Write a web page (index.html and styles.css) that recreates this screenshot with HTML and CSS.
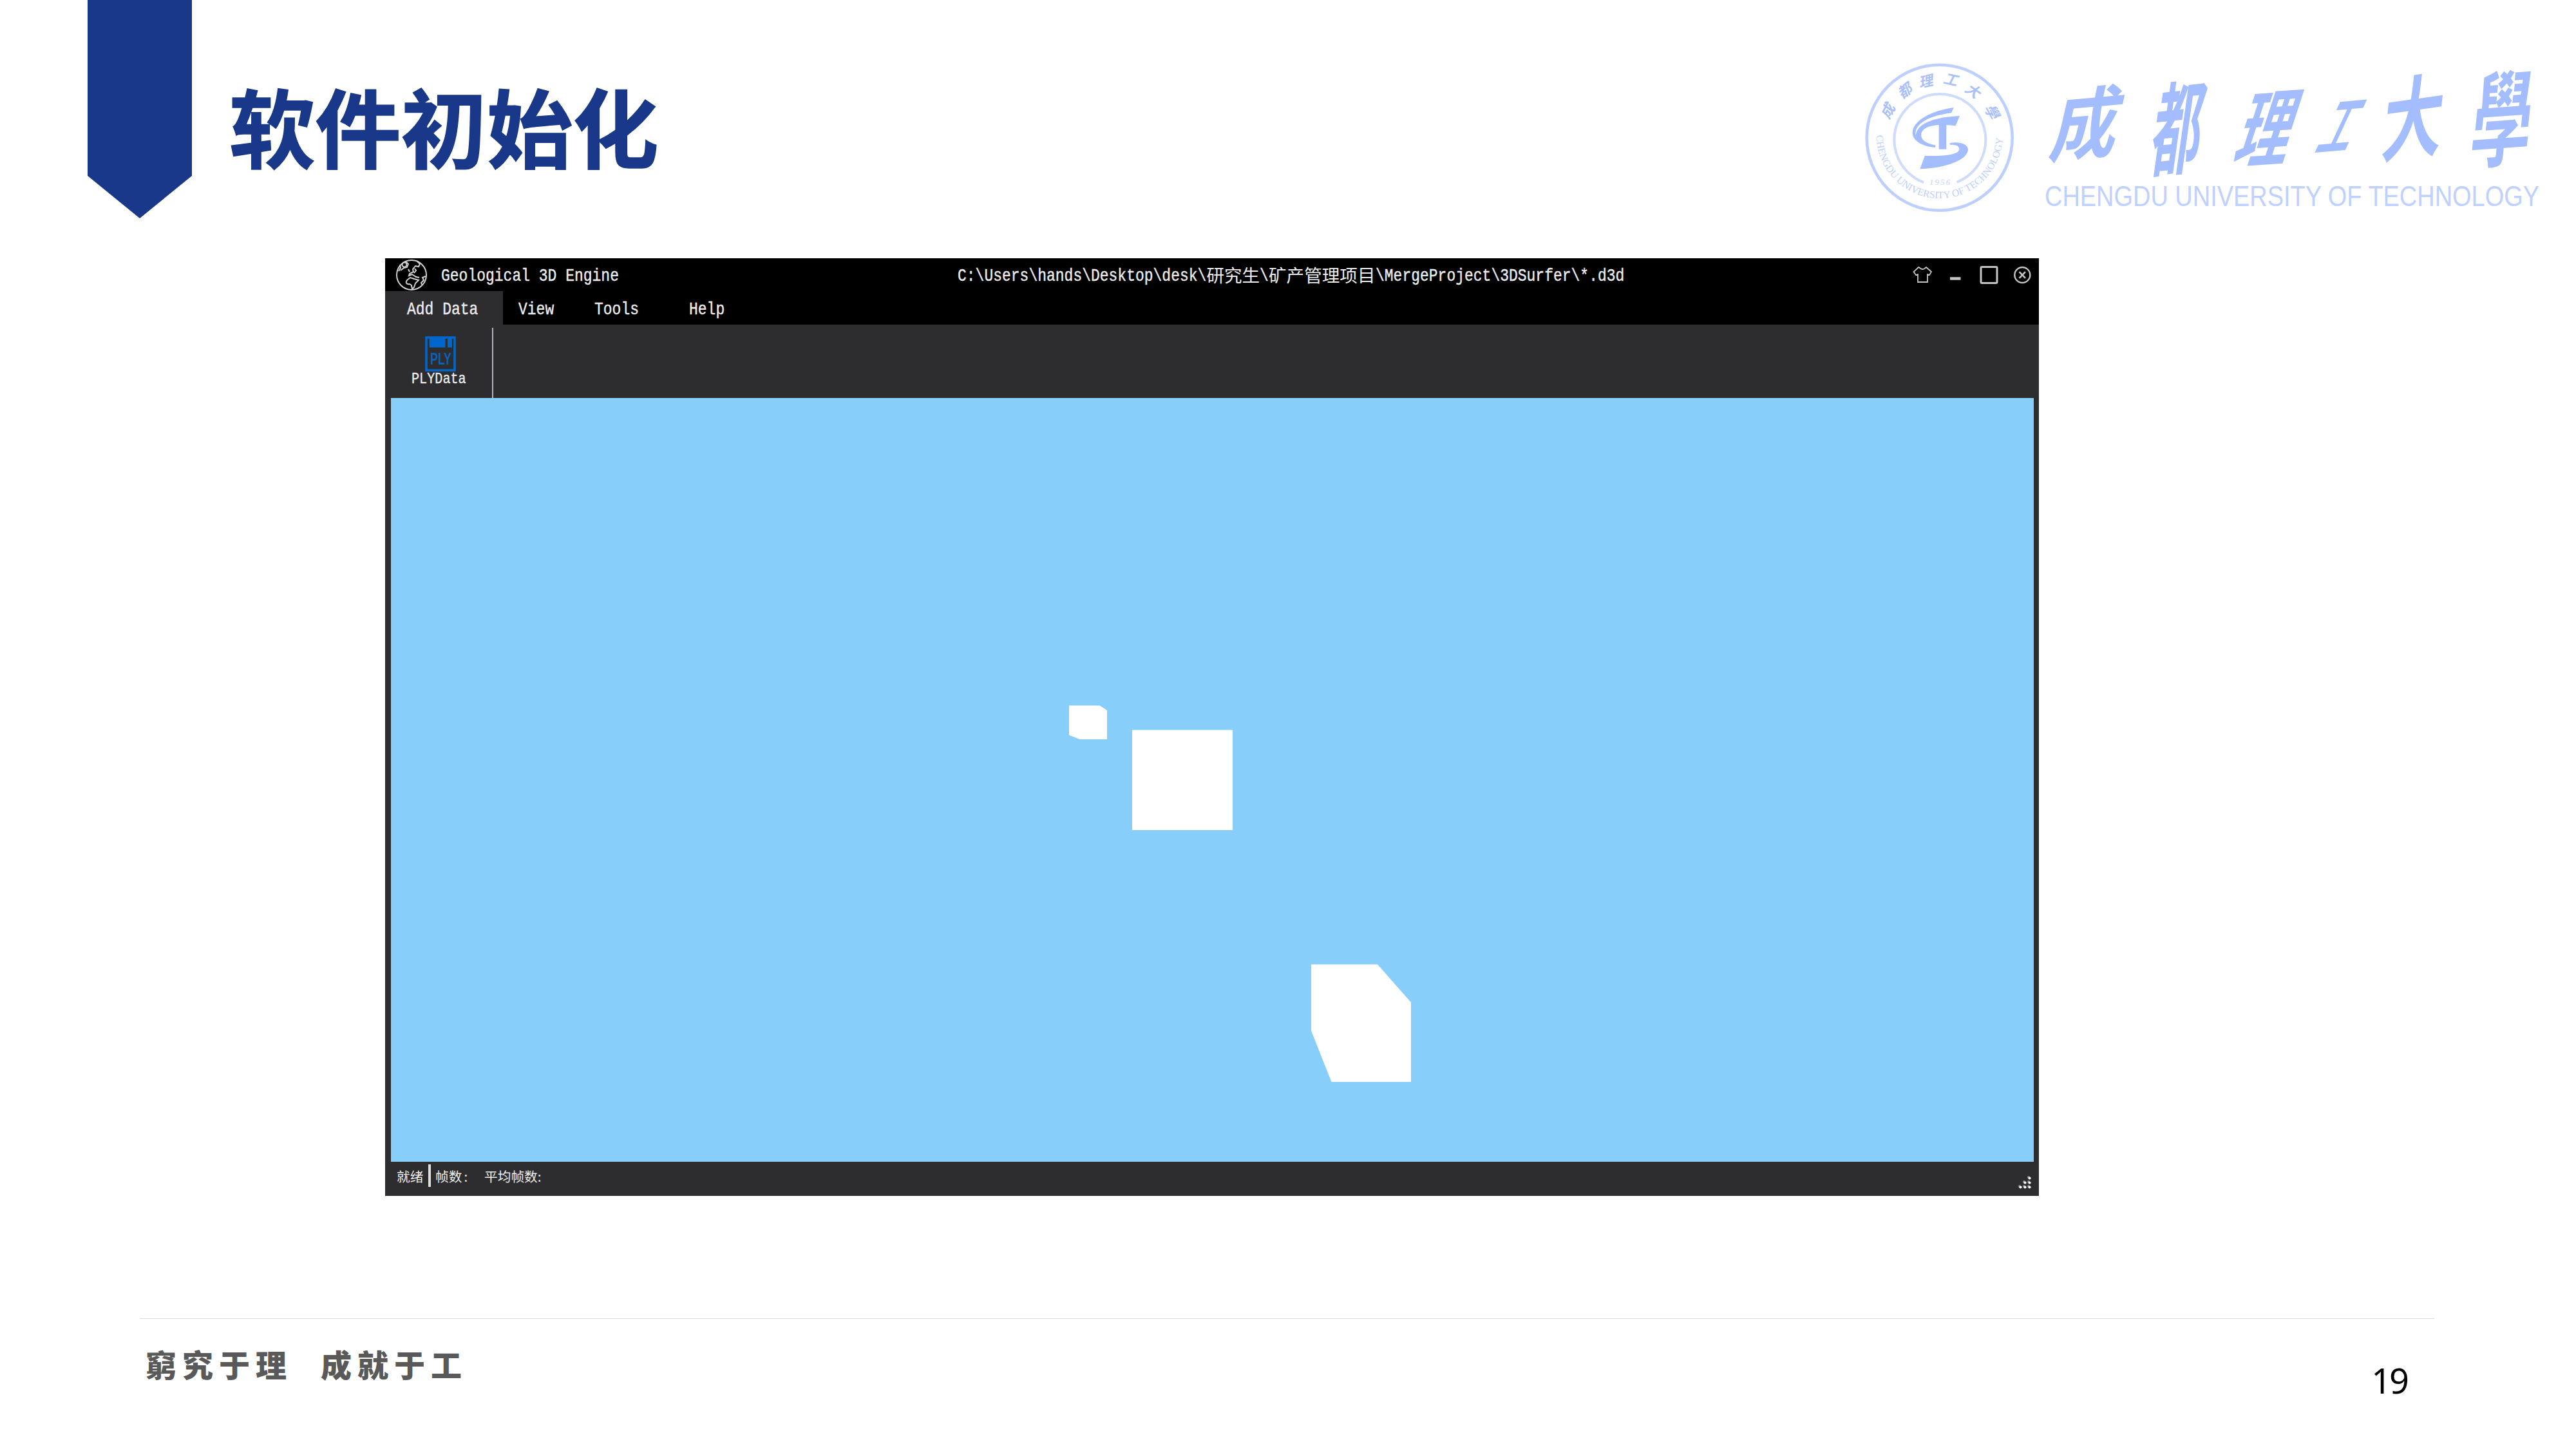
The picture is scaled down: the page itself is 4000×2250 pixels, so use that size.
FILE: index.html
```html
<!DOCTYPE html>
<html lang="zh-CN">
<head>
<meta charset="utf-8">
<title>软件初始化</title>
<link rel="stylesheet" href="styles.css">
</head>
<body>
<main class="slide">
  <header class="head">
    <div class="ribbon-mark"></div>
    <h1 class="title">软件初始化</h1>
    <svg class="brand" viewBox="0 0 1100 300" role="img" aria-label="成都理工大學">
      <g fill="none" stroke="#bdd0fd">
        <circle cx="151.7" cy="153.7" r="113" stroke-width="4.6"/>
        <path d="M127 223.3A71 71 0 1 1 178.500 223" stroke="#cddbfd" stroke-width="4"/>
      </g>
      <g class="mark" transform="scale(.33333)">
        <path d="M521 321C420 335 332 380 329 437C328 475 375 502 435 507L437 497C395 488 367 475 370 445C375 412 420 404 452 402L452 515L487 515L487 402L530 406L549 360C440 365 352 390 344 450C336 400 400 360 510 346Z"/>
        <path d="M503 487C545 477 590 490 588 520C580 570 470 605 364 607L387 545C450 548 545 545 547 515C547 498 530 494 503 494Z"/>
      </g>
      <path id="ring" d="M53.700 150A98 98 0 0 0 249.700 150" fill="none"/>
      <text class="ring-en"><textPath href="#ring" textLength="303">CHENGDU UNIVERSITY OF TECHNOLOGY</textPath></text>
      <g class="ring-cn">
        <text transform="translate(72 111) rotate(-62) skewX(-14)" y="8">成</text>
        <text transform="translate(99 80) rotate(-36) skewX(-14)" y="8">都</text>
        <text transform="translate(132 66) rotate(-12) skewX(-14)" y="8">理</text>
        <text transform="translate(171 64) rotate(12) skewX(-14)" y="8">工</text>
        <text transform="translate(205 82) rotate(36) skewX(-14)" y="8">大</text>
        <text transform="translate(234 115) rotate(62) skewX(-14)" y="8">學</text>
      </g>
      <text class="year" x="153" y="227">1956</text>
      <g class="name-cn">
        <text transform="translate(382 131) rotate(-5) skewX(-18) scale(1.05 1.2)" y="38">成</text>
        <text transform="translate(523 138) rotate(-6) skewX(-14) scale(.78 1.55)" y="38">都</text>
        <text transform="translate(663 138) rotate(-4) skewX(-22) scale(.85 1.3)" y="38">理</text>
        <text transform="translate(777 134) rotate(-5) skewX(-30) scale(.52 .98)" y="38">工</text>
        <text transform="translate(888 122) rotate(-8) skewX(-14) scale(.95 1.38)" y="38">大</text>
        <text transform="translate(1026 124) rotate(-4) skewX(-10) scale(.94 1.6)" y="38">學</text>
      </g>
      <text class="name-en" x="315" y="260" textLength="768" lengthAdjust="spacingAndGlyphs">CHENGDU UNIVERSITY OF TECHNOLOGY</text>
    </svg>
  </header>

  <section class="app">
    <div class="titlebar">
      <svg class="globe" viewBox="0 0 50 50">
        <circle cx="25" cy="25" r="23"/>
        <circle cx="14" cy="9" r="3.500"/>
        <path d="M5 19L8 14L7 9M8 18L13 14L18 13L20 8L16 4M33 3L38 8L36 12L31 11L27 16L28 20L22 23L21 26L26 24L32 28L37 29M22 20L20 16M30 15L32 18L29 22M18 33C15 37 18 40 22 39L25 41L26 47M18 33L23 29L29 31L36 33L31 38L29 44L26 47M47 27L42 29L44 33L40 37L41 40"/>
      </svg>
      <span class="mono app-name">Geological 3D Engine</span>
      <div class="file-path">
        <span class="mono seg-28">C:\Users\hands\Desktop\desk\</span><span class="cn">研究生</span><span class="mono seg-1">\</span><span class="cn">矿产管理项目</span><span class="mono seg-28">\MergeProject\3DSurfer\*.d3d</span>
      </div>
      <svg class="win-buttons" viewBox="0 0 190 51">
        <path d="M9 14L1.500 21L5 26L8 25V37H23V25L26 26L29 21L21 14C20 14 19 17 15.500 17S11 14 9 14Z" stroke-width="1.800"/>
        <path d="M58 31.500H74.500" stroke-width="4.500"/>
        <rect x="106" y="13.500" width="25" height="25" rx="1.500" stroke-width="3"/>
        <circle cx="170.300" cy="26" r="12" stroke-width="2.400"/>
        <path d="M165.500 21.200L175 30.800M175 21.200L165.500 30.800" stroke-width="2.600"/>
      </svg>
    </div>
    <nav class="tabs">
      <span class="tab tab-active"><span class="mono">Add Data</span></span>
      <span class="tab tab-view"><span class="mono">View</span></span>
      <span class="tab tab-tools"><span class="mono">Tools</span></span>
      <span class="tab tab-help"><span class="mono">Help</span></span>
    </nav>
    <div class="toolbar">
      <div class="tool">
        <svg class="disk" viewBox="0 0 48 55">
          <rect x="2" y="2" width="44" height="51" fill="none" stroke="#06c" stroke-width="3.600"/>
          <path d="M6.500 1H31.500V17.500H6.500ZM35 1H42V17.500H35Z" fill="#06c"/>
          <text x="8" y="44" textLength="33" lengthAdjust="spacingAndGlyphs">PLY</text>
        </svg>
        <span class="mono small">PLYData</span>
      </div>
    </div>
    <svg class="viewport" viewBox="606.5 617.5 2551 1186">
      <path d="M1659.500 1095H1707L1718.500 1102.500V1147.500H1676.500L1659.500 1141Z"/>
      <path d="M1757.500 1133H1913.500V1288.500H1757.500Z"/>
      <path d="M2035.500 1497H2138.500L2190.500 1556V1679.500H2067L2035.500 1600Z"/>
    </svg>
    <footer class="status">
      <span class="ready">就绪</span>
      <span class="bar"></span>
      <span class="frames">帧数<span class="colon">:</span></span>
      <span class="average">平均帧数:</span>
      <svg class="grip" viewBox="0 0 22 22">
        <g fill="#888"><circle cx="17" cy="3" r="2"/><circle cx="10" cy="10" r="2"/><circle cx="17" cy="10" r="2"/><circle cx="3" cy="17" r="2"/><circle cx="10" cy="17" r="2"/><circle cx="17" cy="17" r="2"/></g>
        <g fill="#fff"><circle cx="18.500" cy="4.500" r="2.100"/><circle cx="11.500" cy="11.500" r="2.100"/><circle cx="18.500" cy="11.500" r="2.100"/><circle cx="4.500" cy="18.500" r="2.100"/><circle cx="11.500" cy="18.500" r="2.100"/><circle cx="18.500" cy="18.500" r="2.100"/></g>
      </svg>
    </footer>
  </section>

  <footer class="foot">
    <div class="motto"><span>窮究于理</span><span>成就于工</span></div>
    <div class="page-number">19</div>
  </footer>
</main>
</body>
</html>
```
FILE: styles.css
```css
* { box-sizing: border-box; }
html, body { margin: 0; background: #fff; }
.slide {
  width: 4000px;
  height: 2250px;
  overflow: hidden;
  display: flex;
  flex-direction: column;
  font-family: "Noto Sans", "Noto Sans CJK SC", sans-serif;
}
svg { display: block; flex: none; overflow: visible; }

.head { display: flex; height: 401px; padding-left: 136px; flex: none; }
.ribbon-mark {
  width: 162px;
  height: 339px;
  background: #193889;
  clip-path: polygon(0 0, 100% 0, 100% 273px, 50% 100%, 0 273px);
}
.title {
  margin: 93px 0 0 58px;
  font: 900 133.3px/200px "Noto Sans CJK SC", sans-serif;
  font-weight: 700;
  color: #193889;
  -webkit-text-stroke: 1.5px #193889;
  white-space: nowrap;
}
.brand { width: 1100px; height: 300px; margin: 60px 40px 0 auto; }
.mark { fill: #a3bdff; }
.ring-en { font: 15.500px "Liberation Serif", serif; fill: #bccffd; }
.ring-cn { font: 700 22px "Noto Sans CJK TC", sans-serif; fill: #a9c0fc; text-anchor: middle; }
.year { font: italic 13px "Liberation Serif", serif; letter-spacing: 2px; fill: #c4d4fd; text-anchor: middle; }
.name-cn { font: 700 100px "Noto Sans CJK TC", sans-serif; fill: #a3bdff; text-anchor: middle; }
.name-en { font: 45px "Liberation Sans", Arial, sans-serif; fill: #bfd1fe; }

.app {
  width: 2568px;
  height: 1456px;
  margin-left: 598px;
  flex: none;
  display: flex;
  flex-direction: column;
  background: #2d2d2f;
  color: #ececec;
}
.mono {
  display: block;
  flex: none;
  font: 27.6px/55px "Liberation Mono", monospace;
  -webkit-text-stroke: .4px currentColor;
  white-space: pre;
  transform: scaleX(.8333);
  transform-origin: 0 50%;
}
.titlebar { display: flex; height: 51px; padding-left: 16px; background: #000; }
.globe { width: 50px; height: 50px; margin-top: 1px; fill: none; stroke: #d0d0d0; stroke-width: 2; }
.app-name { width: 276px; margin-left: 21px; }
.file-path { display: flex; margin-left: 526px; }
.seg-28 { width: 386.4px; }
.seg-1 { width: 13.8px; }
.cn { font: 27.6px/51px "Noto Sans CJK SC", sans-serif; }
.win-buttons { width: 190px; height: 51px; margin-left: auto; margin-right: 6px; fill: none; stroke: #c4c4c4; }
.tabs { display: flex; height: 52px; background: #000; }
.tab { height: 52px; flex: none; }
.tab-active { width: 183px; padding-left: 34px; background: #2d2d2f; }
.tab-view { width: 142px; padding-left: 24px; }
.tab-tools { width: 147px; }
.tab-help { width: 100px; }
.tab .mono { width: 110px; line-height: 57px; }
.toolbar { height: 114px; padding-top: 5px; }
.tool { width: 168px; height: 109px; padding: 13px 0 0 41px; border-right: 2px solid #b4b3bc; }
.disk { width: 48px; height: 55px; margin-left: 21px; }
.disk text { font: 700 26px "Liberation Sans", sans-serif; fill: #0a5fb8; }
.small { width: 85px; font-size: 24.200px; line-height: 24px; }
.viewport { width: 2551px; height: 1186px; margin-left: 8.500px; background: #87cefa; fill: #fff; overflow: hidden; }
.status {
  flex: 1;
  display: flex;
  padding: 0 8px 0 18px;
  font: 20.7px/44px "Noto Sans CJK SC", sans-serif;
  white-space: nowrap;
}
.ready { width: 49px; }
.bar { width: 4px; height: 35px; margin: 4px 7px 0 0; background: #e0e0e0; }
.frames { width: 76px; }
.colon { margin-left: 3px; }
.grip { width: 22px; height: 22px; margin: 21px 3px 0 auto; }

.foot {
  width: 3563px;
  margin: 190px 0 0 217px;
  border-top: 1px solid #dadada;
  display: flex;
  justify-content: space-between;
}
.motto {
  display: flex;
  gap: 44px;
  padding: 34px 0 0 9px;
  font: 900 48px/70px "Noto Sans CJK TC", sans-serif;
  letter-spacing: 9px;
  color: #595959;
}
.page-number { padding: 58px 42px 0 0; font: 54px/74px "Noto Sans", sans-serif; letter-spacing: -3px; color: #000; }
```
